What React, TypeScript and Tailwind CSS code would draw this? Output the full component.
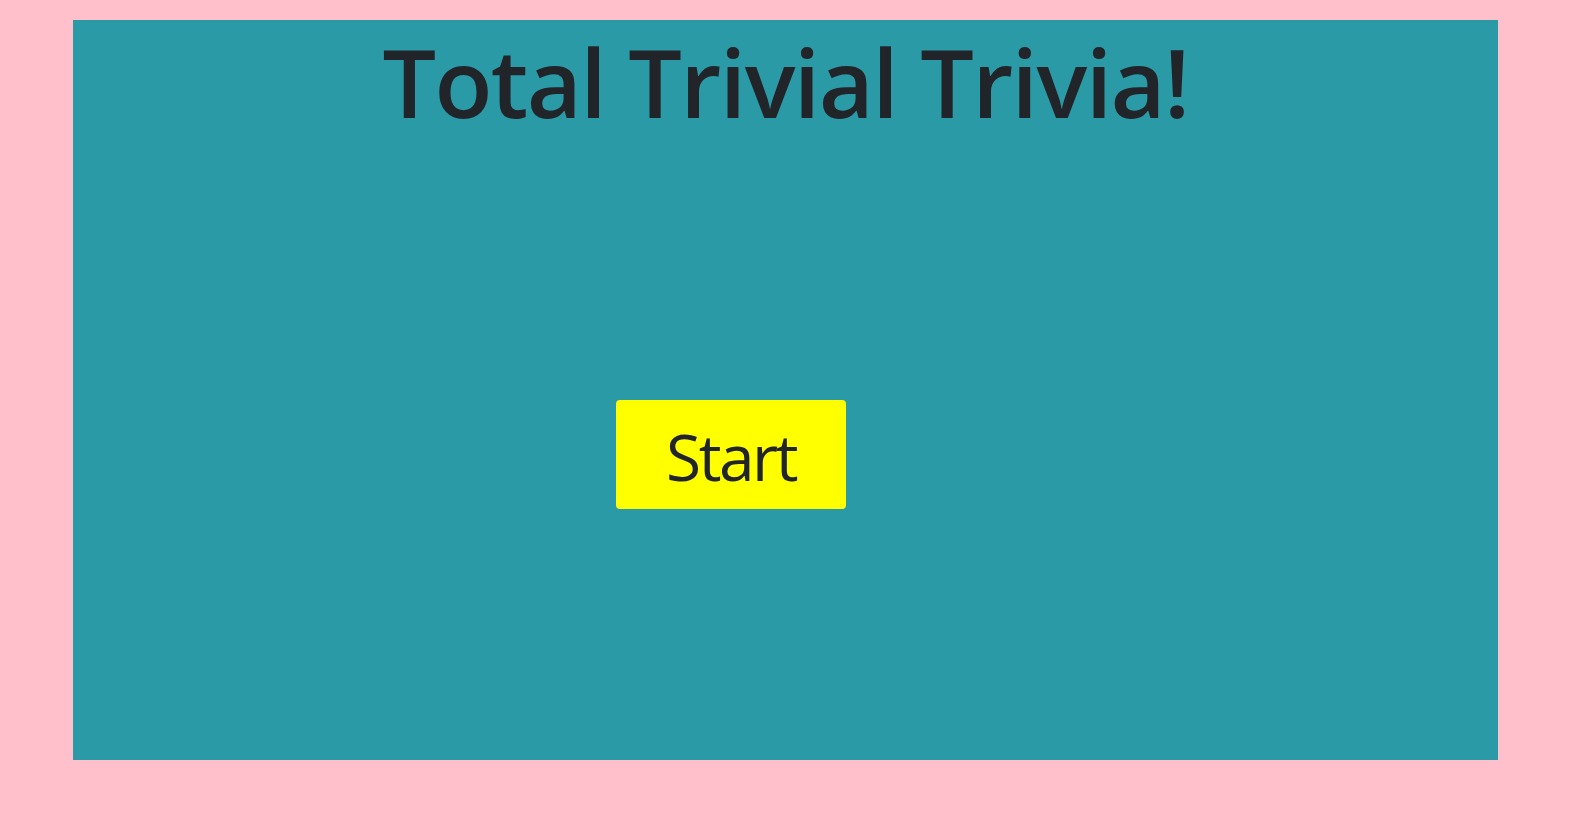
export default function App() {
  return (
    <div className="w-[1580px] h-[818px] bg-[#ffc0cb] pt-[20px] pl-[73px]" style={{ fontFamily: '"Open Sans", "Noto Sans", sans-serif' }}>
      <div className="w-[1425px] h-[740px] bg-[#2a9ba6] flex flex-col">
        <h1 className="text-center text-[95px] leading-[1.2] font-semibold text-[#212529] mt-[4px] tracking-[-1.6px]">Total Trivial Trivia!</h1>
        <div className="mt-[262px] pl-[543px]">
          <button className="w-[230px] h-[109px] bg-[#ffff00] rounded-[4px] text-[64px] text-[#212529] flex items-center justify-center pt-[4px] tracking-[-2.5px]">Start</button>
        </div>
      </div>
    </div>
  );
}
